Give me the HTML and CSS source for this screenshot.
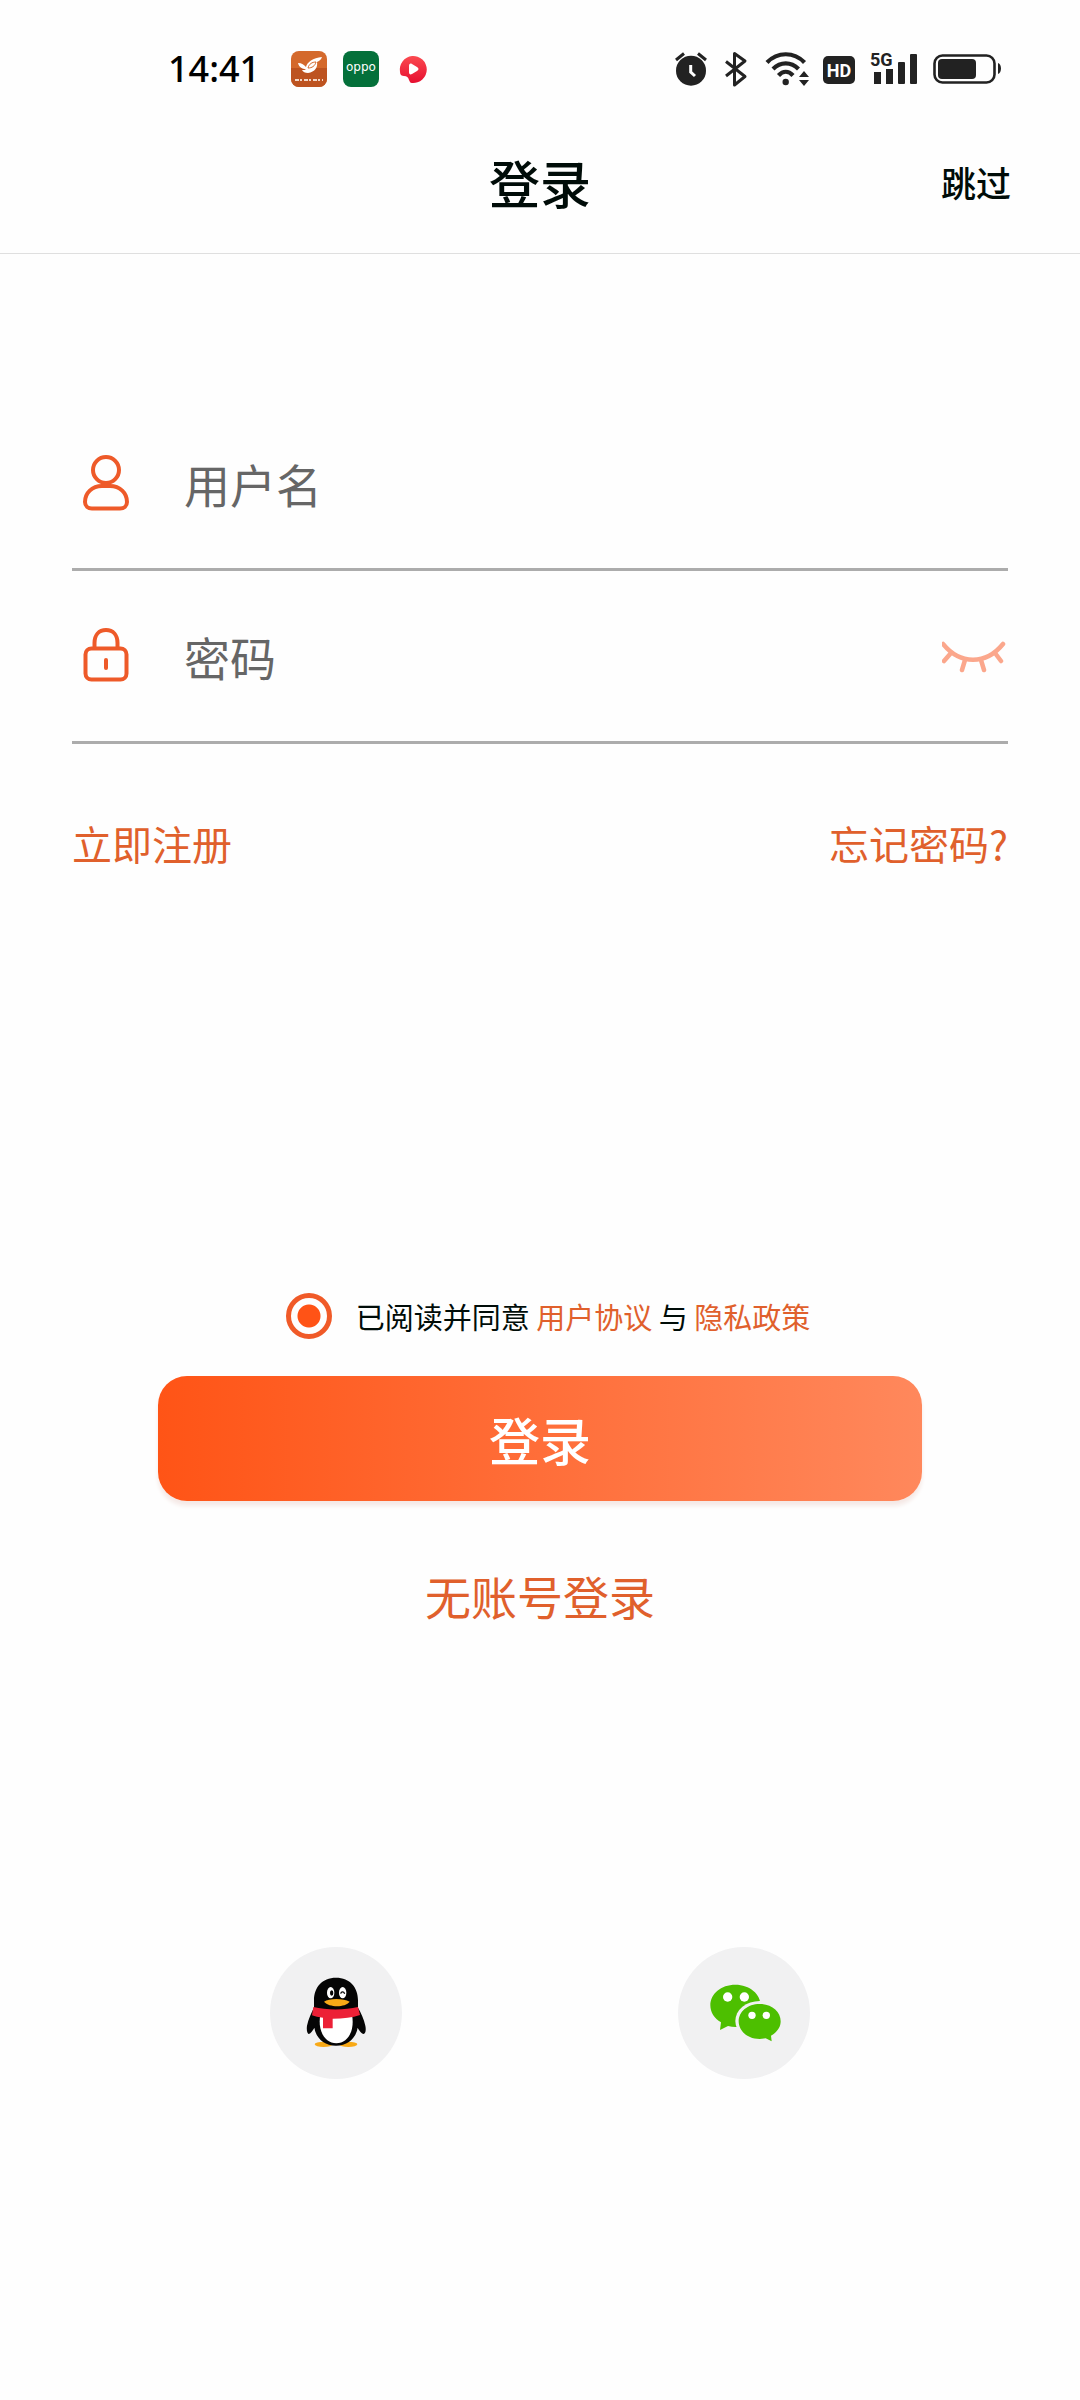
FILE: index.html
```html
<!DOCTYPE html>
<html lang="zh-CN">
<head>
<meta charset="utf-8">
<meta name="viewport" content="width=device-width, initial-scale=1">
<title>登录</title>
<link rel="stylesheet" href="styles.css">
</head>
<body>
<div class="status-bar">
  <div class="status-left">
    <span class="clock">14:41</span>
    <svg class="status-icon" width="36" height="36" viewBox="0 0 36 36" aria-hidden="true">
      <rect width="36" height="36" rx="8" fill="#d4692c"/>
      <path d="M0 17h36v11a8 8 0 0 1-8 8H8a8 8 0 0 1-8-8z" fill="#bd5320"/>
      <path d="M7 12c4 0 6 2 8 4 1-5 7-9 16-10-1 3-3 4-5 5 1 5-2 10-9 11-3 0-5-1-6-3 2 0 3 0 4-1-4 0-7-2-8-6z" fill="#fff"/>
      <path d="M17 17c1-4 4-6 8-6-1 4-4 6-8 6z" fill="none" stroke="#d4692c" stroke-width="1"/>
      <path d="M4 29h28" stroke="#f4d8c8" stroke-width="2" stroke-dasharray="4 1 2 2"/>
    </svg>
    <svg class="status-icon" width="36" height="36" viewBox="0 0 36 36" aria-hidden="true">
      <rect width="36" height="36" rx="8" fill="#04703a"/>
      <text class="oppo" x="18" y="20" text-anchor="middle">oppo</text>
    </svg>
    <svg class="status-icon" width="36" height="36" viewBox="1 0 36 36" aria-hidden="true">
      <defs><linearGradient id="play" x2="0" y2="1"><stop stop-color="#fb4a50"/><stop offset="1" stop-color="#e60f30"/></linearGradient></defs>
      <path d="M6 21A13.500 13.500 0 1 1 18 32c-2 0-2-1-3-3-1-3-2-4-5-4-2 0-4-1-4-4z" fill="url(#play)"/>
      <path d="M15 15c0-2 1-3 3-2l5 3c2 1 2 3 0 4l-5 3c-2 1-3 0-3-2z" fill="#fff"/>
    </svg>
  </div>
  <div class="status-right">
    <svg class="status-icon" width="32" height="36" viewBox="0 0 32 36" aria-hidden="true">
      <circle cx="16" cy="19.700" r="15" fill="#222"/>
      <path d="M1 9l8-6.500M31 9l-8-6.500" stroke="#222" stroke-width="3"/>
      <path d="M15.700 14v7l4.300 4" stroke="#fff" stroke-width="3" fill="none"/>
    </svg>
    <svg class="status-icon" width="30" height="36" viewBox="0 0 30 36" aria-hidden="true">
      <path d="M5 10.500L24 25.500L13.500 34V2.500L24 10L5 25" fill="none" stroke="#222" stroke-width="3" stroke-linejoin="round"/>
    </svg>
    <svg class="status-icon" width="44" height="36" viewBox="0 0 44 36" aria-hidden="true">
      <g fill="none" stroke="#222" stroke-width="4.200">
        <path d="M2 11.500C12.500.500 29 .500 39.500 11.500"/>
        <path d="M8 18C15.500 10.500 26 10.500 33.500 18"/>
        <path d="M13.500 24.500C18 19.500 23.500 19.500 28 24.500"/>
      </g>
      <circle cx="20.700" cy="31" r="3.200" fill="#222"/>
      <path d="M39 20l5 6H34zM34 29h10l-5 6z" fill="#222"/>
    </svg>
    <svg class="status-icon" width="32" height="36" viewBox="0 0 32 36" aria-hidden="true">
      <rect y="5" width="32" height="28" rx="5" fill="#222"/>
      <text class="hd" x="16" y="26" text-anchor="middle">HD</text>
    </svg>
    <svg class="status-icon" width="48" height="36" viewBox="0 0 48 36" aria-hidden="true">
      <text class="net" x="1" y="15">5G</text>
      <path d="M5 21h7v12H5zM17 18h7v15h-7z" fill="#222"/>
      <rect x="29" y="11" width="7" height="22" rx="1" fill="#222"/>
      <rect x="41" y="3" width="7" height="30" rx="1" fill="#222"/>
    </svg>
    <svg class="status-icon" width="70" height="36" viewBox="0 0 70 36" aria-hidden="true">
      <rect x="3.500" y="4.500" width="60" height="27" rx="8" fill="none" stroke="#222" stroke-width="2.600"/>
      <rect x="7" y="8" width="38" height="20" rx="4" fill="#222"/>
      <path d="M67 12c4 1 4 10 0 11z" fill="#222"/>
    </svg>
  </div>
</div>

<header class="title-bar">
  <h1 class="title">登录</h1>
  <a class="skip" href="#skip">跳过</a>
</header>

<main>
  <form class="login-form">
    <div class="field">
      <label class="field-icon" for="username" aria-label="用户名">
        <svg width="48" height="60" viewBox="0 0 48 60" fill="none" stroke="#ee5a29" stroke-width="4">
          <circle cx="24" cy="17" r="13"/>
          <path d="M20 33h8c10 0 17 7 17 16 0 4-3 6.500-7 6.500H10c-4 0-7-2.500-7-6.500 0-9 7-16 17-16z"/>
        </svg>
      </label>
      <input class="field-input" id="username" type="text" placeholder="用户名">
    </div>
    <div class="field">
      <label class="field-icon" for="password" aria-label="密码">
        <svg width="48" height="60" viewBox="0 1 48 60" fill="none" stroke="#ee5a29" stroke-width="4">
          <path d="M12.500 24v-6C12.500 10 17 5 24 5s11.500 5 11.500 13v6"/>
          <rect x="3.500" y="23.500" width="41" height="31" rx="6"/>
          <path d="M24 35v8" stroke-linecap="round"/>
        </svg>
      </label>
      <input class="field-input" id="password" type="password" placeholder="密码">
      <button class="reveal" type="button" aria-label="显示密码">
        <svg width="66" height="36" viewBox="2 -2 66 36" fill="none" stroke="#fba78c" stroke-width="4.500" stroke-linecap="round">
          <path d="M3 4C20 25 46 25 63 4M11 13l-7 8M25 20l-3 10M41 20l3 10M55 13l6 8"/>
        </svg>
      </button>
    </div>
    <div class="form-links">
      <a href="#register">立即注册</a>
      <a href="#forgot">忘记密码?</a>
    </div>
    <div class="agreement">
      <input class="agree-box" id="agree" type="checkbox" checked>
      <label for="agree">已阅读并同意 <a href="#terms">用户协议</a> 与 <a href="#privacy">隐私政策</a></label>
    </div>
    <button class="submit" type="button">登录</button>
    <a class="guest" href="#guest">无账号登录</a>
  </form>

  <div class="socials">
    <button class="social" type="button" aria-label="QQ登录">
      <svg viewBox="31 50 396 396" aria-hidden="true">
        <ellipse cx="192" cy="342" rx="27" ry="8" fill="#f8a916"/>
        <ellipse cx="266" cy="342" rx="27" ry="8" fill="#f8a916"/>
        <path d="M229 142c-42 0-66 29-66 68v22c-7 14-17 34-21 54-2 14 1 24 5 25 5 0 12-10 17-19 5 32 30 54 65 54s60-22 65-54c5 9 12 19 18 19 5-1 8-11 5-25-4-20-14-40-22-54v-22c0-39-24-68-66-68z" fill="#050505"/>
        <path d="M182 254h95c9 45-12 85-47 85s-57-40-48-85z" fill="#fff"/>
        <path d="M161 230c40 10 94 10 134 0l6 24c-22 8-50 11-82 11v29h-29v-32c-13-1-24-4-33-7z" fill="#ec2036"/>
        <ellipse cx="213" cy="187" rx="11" ry="17" fill="#fff"/>
        <ellipse cx="249" cy="187" rx="11" ry="17" fill="#fff"/>
        <ellipse cx="216" cy="188" rx="5" ry="8" fill="#050505"/>
        <path d="M243 190c2-7 9-7 12 0" fill="none" stroke="#050505" stroke-width="4"/>
        <path d="M193 214c15-11 58-11 77 0-14 18-61 18-77 0z" fill="#f8a916"/>
      </svg>
    </button>
    <button class="social" type="button" aria-label="微信登录">
      <svg viewBox="39 50 396 396" aria-hidden="true">
        <path d="M211 163c-43 0-75 27-75 62 0 21 12 39 32 51l-3 23 24-12c8 2 15 3 23 3 43 0 75-29 75-64s-33-63-76-63z" fill="#4dbf00"/>
        <ellipse cx="284" cy="272" rx="73" ry="60" fill="#f1f1f2"/>
        <path d="M284 221c-36 0-63 23-63 52s27 53 63 53c6 0 12-1 18-2l18 9-2-17c18-10 29-25 29-43 0-29-28-52-63-52z" fill="#4dbf00"/>
        <g fill="#fff"><circle cx="188" cy="200" r="14"/><circle cx="238" cy="200" r="14"/><circle cx="261" cy="255" r="11"/><circle cx="304" cy="255" r="11"/></g>
      </svg>
    </button>
  </div>
</main>
</body>
</html>
```

FILE: styles.css
```css
* {
  box-sizing: border-box;
}

body {
  margin: 0;
  min-height: 100vh;
  background: #fefefe;
  color: #000c08;
  font-family: "Noto Sans CJK SC", sans-serif;
}

a {
  color: #e0602c;
  text-decoration: none;
}

button {
  padding: 0;
  border: 0;
  background: none;
  font-family: inherit;
}

svg {
  display: block;
}

.status-bar {
  display: flex;
  justify-content: space-between;
  align-items: center;
  height: 110px;
  padding: 28px 79px 0 168px;
}

.status-left {
  display: flex;
  align-items: center;
  gap: 16px;
}

.status-right {
  display: flex;
  align-items: center;
  gap: 14px;
}

.status-icon {
  overflow: visible;
}

.clock {
  margin-right: 15px;
  color: #000;
  font: 500 36px/36px "Noto Sans", sans-serif;
}

.oppo {
  fill: #fff;
  font: 12px "DejaVu Sans", sans-serif;
}

.hd,
.net {
  fill: #222;
  font: bold 18px "Liberation Sans Narrow", Roboto, sans-serif;
}

.hd {
  fill: #fff;
}

.title-bar {
  display: grid;
  grid-template-columns: 1fr auto 1fr;
  align-items: center;
  height: 144px;
  padding: 0 69px;
  border-bottom: 1px solid #dfdfdf;
}

.title {
  grid-column: 2;
  margin: 0;
  font-size: 51px;
  font-weight: 500;
  line-height: 72px;
}

.skip {
  justify-self: end;
  color: #000c08;
  font-size: 35px;
  font-weight: 500;
  line-height: 48px;
}

.login-form {
  display: flex;
  flex-direction: column;
  padding: 144px 72px 0;
}

.field {
  display: flex;
  align-items: center;
  height: 173px;
  padding-left: 10px;
  border-bottom: 3px solid #acacac;
}

.field-input {
  flex: 1;
  min-width: 0;
  margin-left: 54px;
  padding: 0;
  border: 0;
  outline: 0;
  background: none;
  color: #333;
  font-family: inherit;
  font-size: 46px;
  line-height: 66px;
}

.field-input::placeholder {
  color: #666;
  opacity: 1;
}

.form-links {
  display: flex;
  justify-content: space-between;
  padding-top: 70px;
  font-size: 40px;
  line-height: 58px;
}

.agreement {
  display: flex;
  justify-content: center;
  align-items: center;
  gap: 24px;
  margin-top: 421px;
  padding-left: 16px;
  font-size: 29px;
  line-height: 46px;
}

.agree-box {
  appearance: none;
  width: 46px;
  height: 46px;
  margin: 0;
  border: 5px solid #f05a28;
  border-radius: 50%;
}

.agree-box:checked {
  background: radial-gradient(circle, #ff5316 11px, transparent 12px);
}

.submit {
  height: 125px;
  margin: 37px 86px 0;
  border-radius: 29px;
  background: linear-gradient(90deg, #ff5416, #ff885c);
  box-shadow: 0 5px 4px #f5e9e6;
  color: #fff;
  font-size: 51px;
  font-weight: 500;
  line-height: 72px;
}

.guest {
  align-self: center;
  margin-top: 61px;
  font-size: 46px;
  line-height: 66px;
}

.socials {
  display: flex;
  justify-content: center;
  gap: 276px;
  padding: 319px 0 48px;
}

.social {
  width: 132px;
  height: 132px;
  border-radius: 50%;
  background: #f1f1f2;
}
```
